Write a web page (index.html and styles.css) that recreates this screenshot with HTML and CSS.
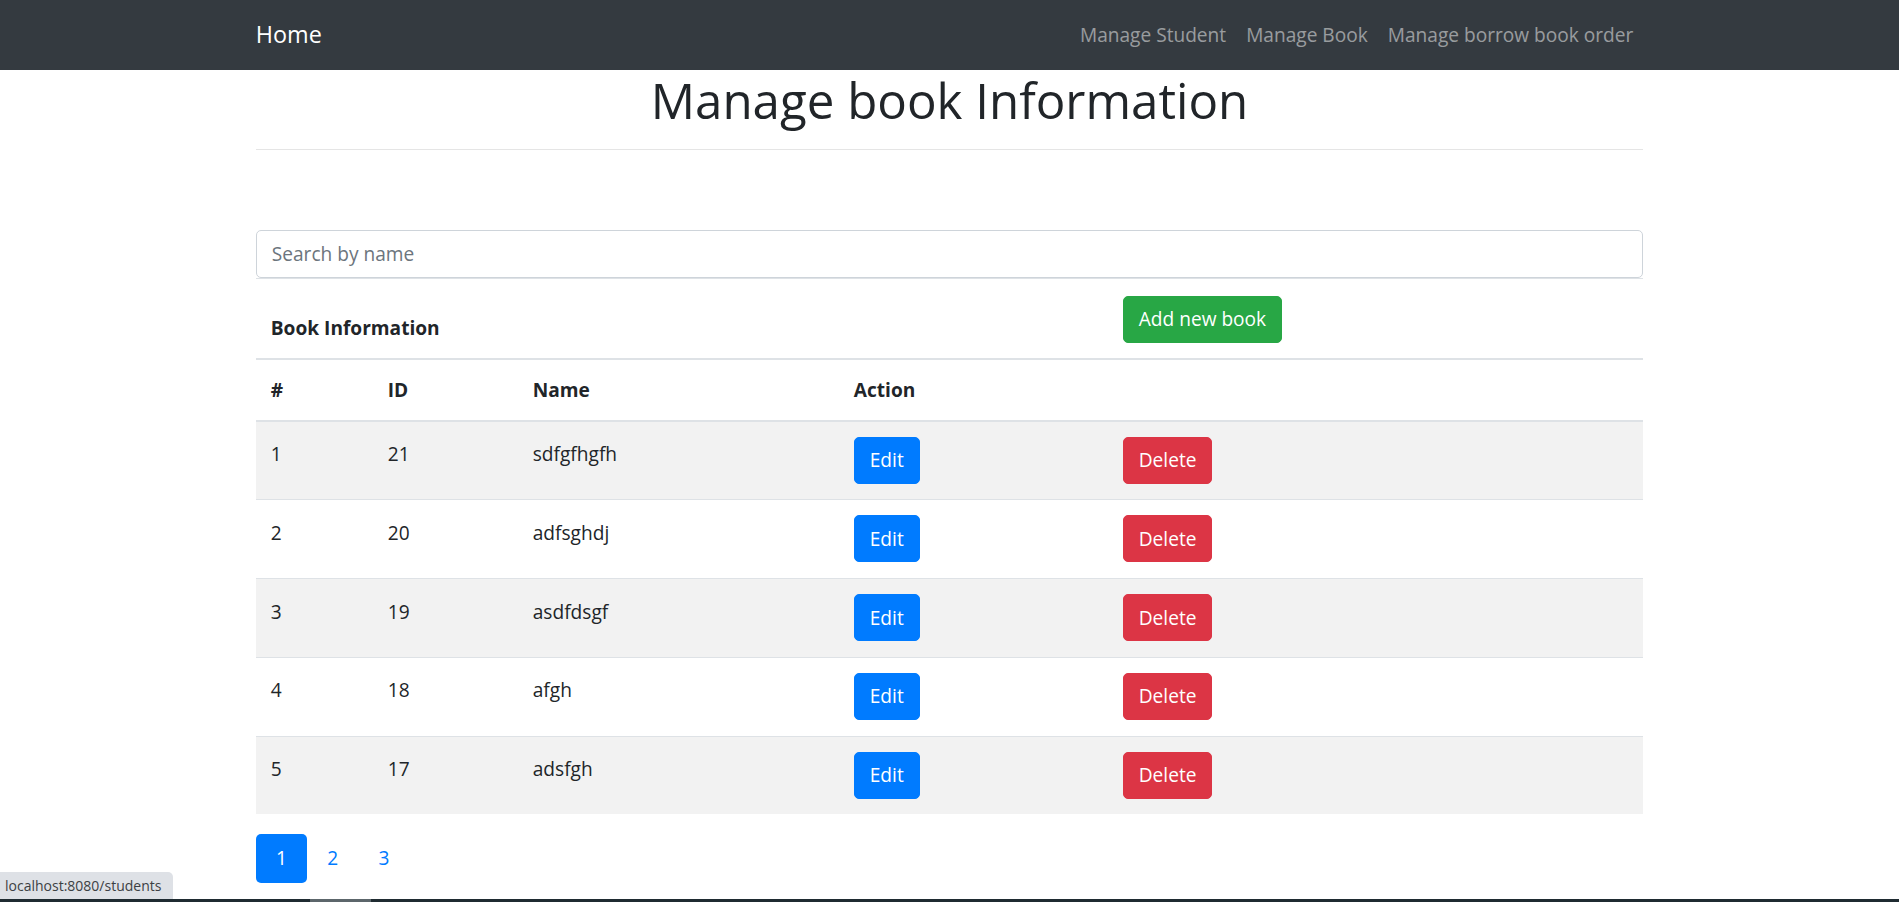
FILE: index.html
```html
<!DOCTYPE html>
<html lang="en">
<head>
<meta charset="utf-8">
<title>Manage book Information</title>
<link rel="stylesheet" href="styles.css">
</head>
<body>
<nav class="navbar">
  <div class="container nav-inner">
    <a class="brand" href="#">Home</a>
    <ul class="nav-links">
      <li><a class="nav-link" href="#">Manage Student</a></li>
      <li><a class="nav-link" href="#">Manage Book</a></li>
      <li><a class="nav-link" href="#">Manage borrow book order</a></li>
    </ul>
  </div>
</nav>
<main class="container">
  <h1 class="title">Manage book Information</h1>
  <hr class="divider">
  <input class="search" type="text" placeholder="Search by name">
  <table class="table">
    <colgroup>
      <col class="col-num">
      <col class="col-id">
      <col class="col-name">
      <col class="col-edit">
      <col class="col-del">
    </colgroup>
    <thead>
      <tr class="caption-row">
        <th colspan="4">Book Information</th>
        <th><button class="btn btn-success" type="button">Add new book</button></th>
      </tr>
      <tr>
        <th>#</th>
        <th>ID</th>
        <th>Name</th>
        <th>Action</th>
        <th></th>
      </tr>
    </thead>
    <tbody>
      <tr><td>1</td><td>21</td><td>sdfgfhgfh</td><td><button class="btn btn-primary" type="button">Edit</button></td><td><button class="btn btn-danger" type="button">Delete</button></td></tr>
      <tr><td>2</td><td>20</td><td>adfsghdj</td><td><button class="btn btn-primary" type="button">Edit</button></td><td><button class="btn btn-danger" type="button">Delete</button></td></tr>
      <tr><td>3</td><td>19</td><td>asdfdsgf</td><td><button class="btn btn-primary" type="button">Edit</button></td><td><button class="btn btn-danger" type="button">Delete</button></td></tr>
      <tr><td>4</td><td>18</td><td>afgh</td><td><button class="btn btn-primary" type="button">Edit</button></td><td><button class="btn btn-danger" type="button">Delete</button></td></tr>
      <tr><td>5</td><td>17</td><td>adsfgh</td><td><button class="btn btn-primary" type="button">Edit</button></td><td><button class="btn btn-danger" type="button">Delete</button></td></tr>
    </tbody>
  </table>
  <ul class="pagination">
    <li><a class="page-link active" href="#">1</a></li>
    <li><a class="page-link" href="#">2</a></li>
    <li><a class="page-link" href="#">3</a></li>
  </ul>
</main>
<div class="status">localhost:8080/students</div>
<div class="bottom-strip"><span class="strip-thumb"></span></div>
</body>
</html>
```
FILE: styles.css
```css
html {
  zoom: 1.25;
}
* {
  box-sizing: border-box;
}
body {
  margin: 0;
  font-family: "Open Sans", "Noto Sans", "Liberation Sans", sans-serif;
  font-size: 15.3px;
  line-height: 24px;
  color: #212529;
  background: #fff;
  overflow: hidden;
}
a {
  text-decoration: none;
}
.container {
  max-width: 1140px;
  margin: 0 auto;
  padding: 0 15px;
}

/* navbar */
.navbar {
  background: #343a40;
  height: 56px;
}
.nav-inner {
  height: 56px;
  display: flex;
  align-items: center;
  justify-content: space-between;
}
.brand {
  color: #fff;
  font-size: 18.7px;
  line-height: 30px;
}
.nav-links {
  display: flex;
  list-style: none;
  margin: 0;
  padding: 0;
}
.nav-link {
  display: block;
  padding: 8px 8px;
  color: rgba(255, 255, 255, 0.5);
}

/* heading */
.title {
  margin: 1px 0 0;
  text-align: center;
  font-size: 39.4px;
  font-weight: 500;
  line-height: 46px;
  color: #212529;
}
.divider {
  margin: 16px 0 0;
  border: 0;
  border-top: 1px solid rgba(0, 0, 0, 0.1);
}

/* search */
.search {
  display: block;
  width: 100%;
  height: 38.8px;
  margin-top: 64px;
  padding: 6px 12px;
  font-family: inherit;
  font-size: 15.3px;
  line-height: 24px;
  color: #495057;
  border: 1px solid #ced4da;
  border-radius: 4px;
  background: #fff;
}
.search::placeholder {
  color: #6c757d;
}

/* table */
.table {
  width: 100%;
  border-collapse: collapse;
  table-layout: fixed;
  margin-bottom: 16px;
}
.col-num { width: 93.6px; }
.col-id { width: 116px; }
.col-name { width: 256.8px; }
.col-edit { width: 215.2px; }
.col-del { width: auto; }
.table th,
.table td {
  padding: 12px;
  text-align: left;
  border-top: 1px solid #dee2e6;
}
.table th {
  font-weight: 700;
  vertical-align: bottom;
  border-bottom: 2px solid #dee2e6;
}
.table .caption-row th {
  padding-top: 13px;
}
.table td {
  vertical-align: top;
  padding-top: 14px;
  padding-bottom: 12.6px;
}
.table td .btn {
  margin-top: -2px;
}
.table tbody tr:nth-child(odd) {
  background: rgba(0, 0, 0, 0.05);
}

/* buttons */
.btn {
  display: inline-block;
  padding: 6px 12px;
  font-family: inherit;
  font-size: 15.3px;
  line-height: 24px;
  font-weight: 400;
  color: #fff;
  border: 1px solid transparent;
  border-radius: 4px;
  vertical-align: top;
}
.btn-primary {
  background: #007bff;
  border-color: #007bff;
}
.btn-danger {
  background: #dc3545;
  border-color: #dc3545;
}
.btn-success {
  background: #28a745;
  border-color: #28a745;
}

/* pagination */
.pagination {
  display: flex;
  list-style: none;
  margin: 0;
  padding: 0;
}
.page-link {
  display: block;
  width: 41px;
  height: 39px;
  line-height: 39px;
  text-align: center;
  color: #007bff;
  border-radius: 4px;
}
.page-link.active {
  background: #007bff;
  color: #fff;
}

/* browser status bubble overlay */
.status {
  position: fixed;
  left: 0;
  bottom: 2.4px;
  width: 138px;
  height: 21.6px;
  padding: 0 4px;
  font-size: 11.2px;
  line-height: 21.6px;
  color: #3c4043;
  background: #dee1e6;
  border-top-right-radius: 4px;
  white-space: nowrap;
}
.bottom-strip {
  position: fixed;
  left: 0;
  right: 0;
  bottom: 0;
  height: 2.4px;
  background: #1f2b31;
}
.strip-thumb {
  position: absolute;
  left: 248px;
  width: 49px;
  top: 0;
  bottom: 0;
  background: #5c666b;
}
```
